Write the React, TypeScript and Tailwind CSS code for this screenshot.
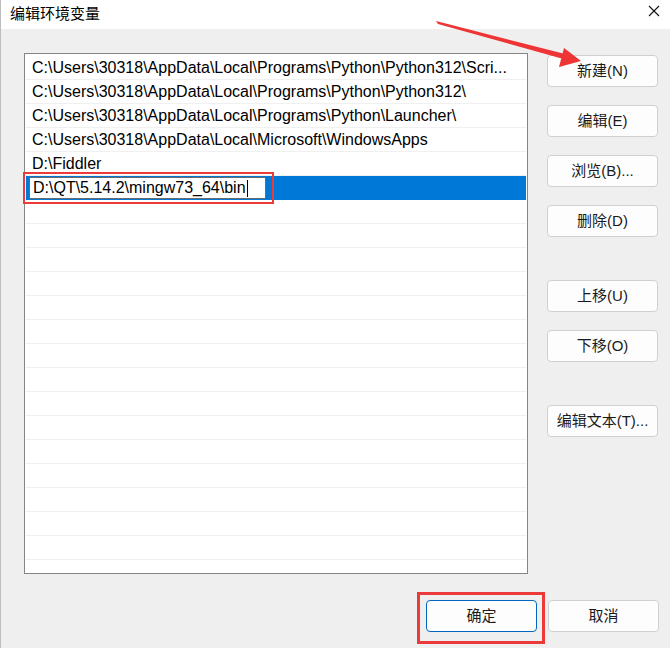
import React from "react";

const paths = [
  "C:\\Users\\30318\\AppData\\Local\\Programs\\Python\\Python312\\Scri...",
  "C:\\Users\\30318\\AppData\\Local\\Programs\\Python\\Python312\\",
  "C:\\Users\\30318\\AppData\\Local\\Programs\\Python\\Launcher\\",
  "C:\\Users\\30318\\AppData\\Local\\Microsoft\\WindowsApps",
  "D:\\Fiddler",
];

const editing = "D:\\QT\\5.14.2\\mingw73_64\\bin";

function SideButton({ label, className = "" }: { label: string; className?: string }) {
  return (
    <button
      className={`w-[111px] h-[32px] rounded-[4px] border border-[#d0d0d0] bg-[#fdfdfd] text-[15px] text-[#1a1a1a] ${className}`}
    >
      {label}
    </button>
  );
}

export default function App() {
  const rows = Array.from({ length: 21 }, (_, i) => i);

  return (
    <div className="relative w-[670px] h-[648px] overflow-hidden bg-[#efefef] border-l border-[#bdbdbd] font-['Liberation_Sans','Noto_Sans_CJK_SC',sans-serif] text-black">
      {/* Title bar */}
      <div className="h-[29px] bg-white flex items-center justify-between pl-[9px] pr-[10px]">
        <span className="text-[15px] font-['Noto_Sans_CJK_SC',sans-serif] leading-none -mt-[5px]">编辑环境变量</span>
        <svg width="12" height="12" viewBox="0 0 12 12" className="-mt-[8px]">
          <path d="M1 1L11 11M11 1L1 11" stroke="#111" strokeWidth="1.1" />
        </svg>
      </div>

      {/* Main */}
      <div className="flex pt-[24px] pl-[23px]">
        <div className="w-[504px] h-[521px] border border-[#858585] bg-white px-[1px] pt-[2px] overflow-hidden">
          {rows.map((i) => {
            if (i === paths.length) {
              return (
                <div key={i} className="relative h-[24px] bg-[#0078d7] flex items-center pl-[3px]">
                  <div className="w-[237px] h-[22px] bg-white border border-[#6a6a6a] flex items-center pl-[3px] text-[16px]">
                    <span>{editing}</span>
                    <span className="ml-[1px] w-[1px] h-[17px] bg-black" />
                  </div>
                </div>
              );
            }
            return (
              <div
                key={i}
                className="h-[24px] border-b border-[#f0f0f0] flex items-center pl-[6px] text-[16px] whitespace-nowrap"
              >
                {paths[i] ?? ""}
              </div>
            );
          })}
        </div>

        <div className="ml-[19px] pt-[2px] flex flex-col">
          <SideButton label="新建(N)" />
          <SideButton label="编辑(E)" className="mt-[18px]" />
          <SideButton label="浏览(B)..." className="mt-[18px]" />
          <SideButton label="删除(D)" className="mt-[18px]" />
          <SideButton label="上移(U)" className="mt-[43px]" />
          <SideButton label="下移(O)" className="mt-[18px]" />
          <SideButton label="编辑文本(T)..." className="mt-[43px]" />
        </div>
      </div>

      {/* Bottom buttons */}
      <div className="flex justify-end gap-[11px] pr-[11px] mt-[26px]">
        <button className="w-[111px] h-[32px] rounded-[4px] border border-[#0067c0] bg-[#fdfdfd] text-[15px] text-[#1a1a1a]">
          确定
        </button>
        <SideButton label="取消" />
      </div>

      {/* Annotations */}
      <div className="absolute left-[22px] top-[172px] w-[251px] h-[32px] border-2 border-[#ea3a3a] pointer-events-none" />
      <div className="absolute left-[416px] top-[592px] w-[128px] h-[52px] border-[3px] border-[#ea3a3a] pointer-events-none" />
      <svg className="absolute left-0 top-0 pointer-events-none" width="670" height="648">
        <polygon points="435,21 437,24 566,60 568,55" fill="#ee3434" />
        <polygon points="580,61 563,48 558,67" fill="#ee3434" />
      </svg>
    </div>
  );
}
